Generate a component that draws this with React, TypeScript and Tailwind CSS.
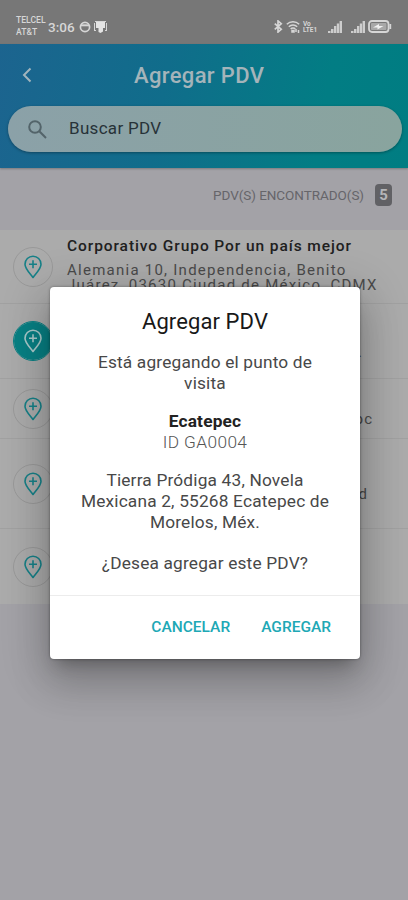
import React from "react";

function PinPlus() {
  return (
    <svg viewBox="0 0 20 24" className="h-6 w-5" fill="none" stroke="currentColor" strokeWidth="1.6" strokeLinejoin="round">
      <path d="M10 22.5C8.2 19.4 2 14.2 2 9.2A8 8 0 0 1 18 9.2C18 14.2 11.8 19.4 10 22.5Z" />
      <path d="M10 5.2v8M6 9.2h8" />
    </svg>
  );
}

function Signal() {
  return (
    <svg viewBox="0 0 14 13" className="h-[13px] w-[14px]" fill="#cdcdcd">
      <path d="M0 11h2.500v2H0zM3 9h2.500v4H3zM6 6h2.300v7H6zM8.800 3.500h2.300V13H8.800zM11.600 1H14v12h-2.400z" />
    </svg>
  );
}

function StatusBar() {
  return (
    <div className="flex h-11 shrink-0 items-start justify-between bg-[#777777] pr-[16px] pl-4 text-[#d6d6d6]">
      <div className="flex">
        <div className="mt-[15px] w-[32px] text-[8.600px] leading-[11.5px] font-medium whitespace-nowrap">
          <div>TELCEL</div>
          <div>AT&amp;T</div>
        </div>
        <div className="mt-[18px] w-[31px] text-[13.500px] leading-[18px] font-medium whitespace-nowrap">3:06</div>
        <svg viewBox="0 0 12 12" className="mt-[21px] size-3" fill="none" stroke="currentColor" strokeWidth="1.7">
          <circle cx="6" cy="6" r="4.6" />
          <path d="M2 4.3h8" strokeWidth="2" />
        </svg>
        <svg viewBox="0 0 13 13" className="mt-[20px] ml-[3px] size-[13px]" fill="#e4e4e4">
          <path d="M2 1h9v7H9v3.5L6.500 13 4.500 12V8H2z" />
          <path d="M.5 3v7M12.500 3v7M0 10.500h2M11 10.500h2M1 1.500h11" stroke="#d6d6d6" />
        </svg>
      </div>
      <div className="mt-[20px] flex">
        <svg viewBox="0 0 10 14" className="h-[13px] w-[10px]" fill="none" stroke="currentColor" strokeWidth="1.800">
          <path d="M1.500 4l7 6L5 13V1l3.500 3-7 6" />
        </svg>
        <svg viewBox="0 0 14 13" className="ml-[3px] h-[13px] w-[14px]" fill="none" stroke="currentColor" strokeWidth="1.500">
          <path d="M.8 4.200a9 9 0 0 1 12.400 0M2.800 6.700a6 6 0 0 1 8.400 0M4.700 9a3 3 0 0 1 4.600 0" />
          <path d="M6 10.500h2v1.500H6zM10 9v3M12.500 10v3" />
        </svg>
        <div className="ml-[3px] w-[16px] pt-px text-[6.500px] leading-[6px] font-bold whitespace-nowrap">
          <div>Vo</div>
          <div>LTE1</div>
        </div>
        <div className="ml-[9px]"><Signal /></div>
        <div className="ml-[9px]"><Signal /></div>
        <svg viewBox="0 0 24 13" className="ml-[3px] h-[13px] w-[24px]" fill="none" stroke="currentColor" strokeWidth="1.800">
          <rect x="1" y="1" width="19.500" height="11" rx="3" />
          <rect x="3" y="3" width="15.500" height="7" rx="1" fill="#a8a8a8" stroke="none" />
          <path d="M5 7.500l6-3.500v2h4.500l-6 3.500v-2z" fill="#f0f0f0" stroke="none" />
          <path d="M22.300 4v5" />
        </svg>
      </div>
    </div>
  );
}

function Header() {
  return (
    <div className="h-[124px] shrink-0 bg-linear-[100deg,#1c648f_0%,#106d8b_40%,#027d84_78%,#007d82_100%] shadow-[0_1px_2px_#00000040]">
      <div className="flex h-[62px] items-center">
        <svg viewBox="0 0 10 16" className="ml-[22px] h-4 w-[10px]" fill="none" stroke="#a2b5bd" strokeWidth="2">
          <path d="M8.500 1.500L2 8l6.500 6.500" />
        </svg>
        <h1 className="ml-[102px] pt-px text-[22px] font-medium tracking-[0.350px] text-[#a4b4ba]">Agregar PDV</h1>
      </div>
      <div className="mr-[6px] ml-2 flex h-[46px] items-center rounded-full bg-linear-to-r from-[#8ba1a8] to-[#89a49e] pl-[20px] shadow-[0_1px_3px_#00000055]">
        <svg viewBox="0 0 19 19" className="size-[19px]" fill="none" stroke="#53646a" strokeWidth="2">
          <circle cx="7" cy="7" r="5.800" />
          <path d="M11.300 11.300L18 18" />
        </svg>
        <span className="ml-[22px] text-[17px] tracking-[0.300px] text-[#273238]">Buscar PDV</span>
      </div>
    </div>
  );
}

function Row({ height, active, children }: { height: string; active?: boolean; children?: React.ReactNode }) {
  return (
    <div className={`flex items-center border-b border-[#a1a1a1] pl-[13px] last:border-0 ${height}`}>
      <div
        className={`flex size-10 shrink-0 items-center justify-center rounded-full border ${
          active ? "border-[#088084] bg-[#088084] bg-clip-padding text-[#a9c9ca]" : "border-[#999999] text-[#168087]"
        }`}
      >
        <PinPlus />
      </div>
      {children}
    </div>
  );
}

function Fragment({ text, width }: { text: string; width: string }) {
  return <div className={`pt-[22px] text-right text-[15px] tracking-[1px] text-[#4a4a4a] ${width}`}>{text}</div>;
}

function Dialog() {
  return (
    <div className="absolute top-[287px] left-[50px] flex h-[372px] w-[310px] flex-col rounded-[4px] bg-white shadow-[0_11px_15px_-7px_#00000040,0_24px_38px_3px_#00000026,0_9px_46px_8px_#00000024,0_0_3px_#00000060]">
      <div className="flex h-[309px] flex-col border-b border-[#ececec] text-center">
        <h2 className="mt-[20px] text-[22px] leading-[30px] tracking-[0.1px] text-[#181818]">Agregar PDV</h2>
        <div className="mt-[15px] text-[17.300px] leading-[20.600px] tracking-[0.180px] whitespace-nowrap text-[#484848]">
          <p>Está agregando el punto de<br />visita</p>
          <p className="mt-[18px] font-bold text-[#222222]">Ecatepec</p>
          <p className="font-light tracking-[0.400px] text-[#555555]">ID GA0004</p>
          <p className="mt-[18px]">Tierra Pródiga 43, Novela<br />Mexicana 2, 55268 Ecatepec de<br />Morelos, Méx.</p>
          <p className="mt-[20.600px]">¿Desea agregar este PDV?</p>
        </div>
      </div>
      <div className="flex flex-1 items-center justify-end gap-[31px] pr-[29px] text-[15.500px] font-medium text-[#20a8b5]">
        <button>CANCELAR</button>
        <button>AGREGAR</button>
      </div>
    </div>
  );
}

export default function App() {
  return (
    <div className="relative flex h-[900px] w-[408px] flex-col overflow-hidden bg-[#a3a2a7] font-[Roboto,sans-serif]">
      <StatusBar />
      <Header />
      <div className="flex h-[62px] shrink-0 items-center justify-end pr-[16px] pb-[8px]">
        <span className="text-[13.500px] tracking-[-0.050px] text-[#66656a]">PDV(S) ENCONTRADO(S)</span>
        <span className="ml-[11px] flex h-[22px] w-[17px] items-center justify-center rounded-[4px] bg-[#616165] text-[15px] font-bold text-[#b5b5b8]">5</span>
      </div>
      <div className="flex shrink-0 flex-col bg-[#ababab]">
        <Row height="h-[74px]">
          <div className="ml-[14px] h-full pt-[6px] whitespace-nowrap">
            <div className="text-[15.500px] leading-[20px] font-medium tracking-[0.920px] text-[#202020]">Corporativo Grupo Por un país mejor</div>
            <div className="mt-[7px] text-[15px] leading-[15px] tracking-[1.250px] text-[#4a4a4a]">
              Alemania 10, Independencia, Benito<br />Juárez, 03630 Ciudad de México, CDMX
            </div>
          </div>
        </Row>
        <Row height="h-[75px]" active><Fragment text="." width="w-[310px]" /></Row>
        <Row height="h-[60px]"><Fragment text="oc" width="w-[320px]" /></Row>
        <Row height="h-[90px]"><Fragment text="d" width="w-[315px]" /></Row>
        <Row height="h-[75px]" />
      </div>
      <Dialog />
    </div>
  );
}
